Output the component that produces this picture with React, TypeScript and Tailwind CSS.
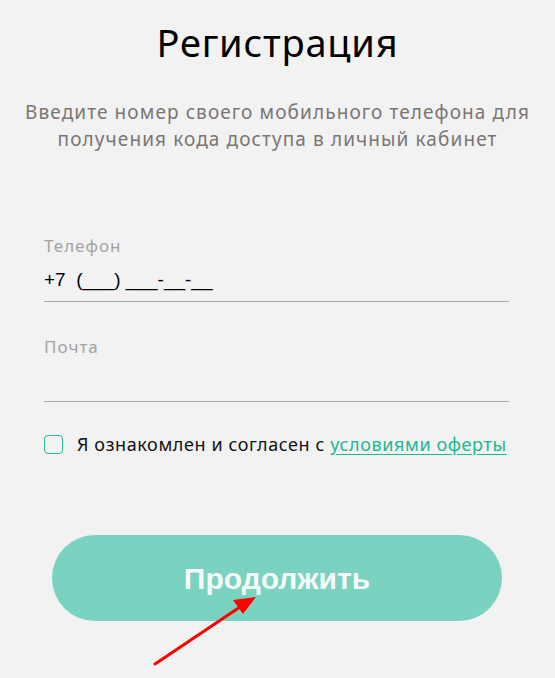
import React from "react";

const App = () => {
  return (
    <div className="relative min-h-[678px] w-[555px] bg-[#f2f2f2] font-['Noto_Sans',sans-serif]">
      <div className="flex flex-col items-center pt-[19px]">
        <h1 className="text-[38px] leading-[46px] tracking-[0.8px] text-black">Регистрация</h1>
        <p className="mt-[34px] text-center text-[19px] leading-[27px] tracking-[1.1px] text-[#7b7573]">
          Введите номер своего мобильного телефона для
          <br />
          получения кода доступа в личный кабинет
        </p>
      </div>

      <form className="ml-[44px] mt-[82px] w-[465px]">
        <div className="border-b border-[#a9a9a9] pb-[10px]">
          <label className="block text-[17px] leading-[22px] tracking-[1px] text-[#a3a3a3]">Телефон</label>
          <div className="mt-[12px] font-['Liberation_Sans',sans-serif] text-[19px] leading-[22px] text-black">
            +7&nbsp;&nbsp;(___) ___-__-__
          </div>
        </div>
        <div className="mt-[34px] h-[66px] border-b border-[#a9a9a9]">
          <label className="block text-[17px] leading-[22px] tracking-[1px] text-[#a3a3a3]">Почта</label>
        </div>

        <div className="mt-[29px] flex items-center">
          <span className="h-[19px] w-[19px] shrink-0 rounded-[4px] border-[1.5px] border-[#2bb99a]" />
          <span className="ml-[14px] text-[18px] tracking-[0.6px] text-[#111]">
            Я ознакомлен и согласен с{" "}
            <a className="text-[#20b892] underline underline-offset-[3px]">условиями оферты</a>
          </span>
        </div>
      </form>

      <div className="mt-[77px] ml-[52px] flex h-[86px] w-[450px] items-center justify-center rounded-full bg-[#79d3c0]">
        <span className="font-['Liberation_Sans',sans-serif] text-[30px] font-bold text-[#f6fbfa]">
          Продолжить
        </span>
      </div>

      <svg className="absolute left-0 top-0" width="555" height="678" viewBox="0 0 555 678">
        <line x1="155" y1="664" x2="240" y2="607" stroke="#ff0000" strokeWidth="3" strokeLinecap="round" />
        <polygon points="256,597 233,600 243,614" fill="#ff0000" />
      </svg>
    </div>
  );
};

export default App;
